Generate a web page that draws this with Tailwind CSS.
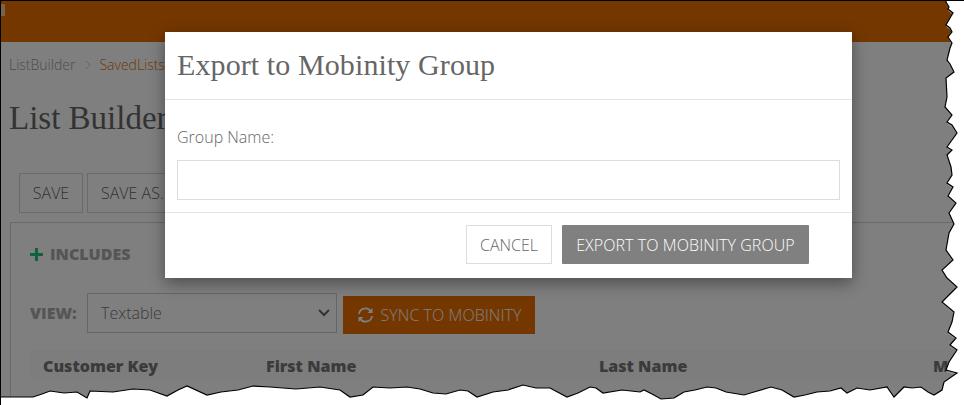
<!DOCTYPE html>
<html>
<head>
<meta charset="utf-8">
<script src="https://cdn.jsdelivr.net/npm/@tailwindcss/browser@4"></script>
</head>
<body class="bg-white">
<div class="relative w-[964px] h-[405px] overflow-hidden bg-white font-['Open_Sans',sans-serif] border-t border-l border-black">
  <div class="h-[41px] bg-[#e96e00] flex items-start pt-[3px]">
    <span class="block w-1 h-[12px] bg-white/60"></span>
  </div>
  <div class="pl-[8px] pt-[13px] flex items-center text-[14px] leading-[20px] text-[#999] font-light">
    <span>ListBuilder</span>
    <svg class="ml-[10px] mr-[8px]" width="6" height="10" viewBox="0 0 6 10"><path d="M1 1l4 4-4 4" fill="none" stroke="#ccc" stroke-width="1"/></svg>
    <span class="text-[#e96e00]">SavedLists</span>
  </div>
  <h1 class="pl-[8px] pt-[21px] text-[33px] leading-[44px] text-[#666] font-['Liberation_Serif',serif]">List Builder</h1>
  <div class="pl-[18px] pt-[33px] flex gap-1">
    <button class="w-[64px] h-10 border border-[#d5d5d5] text-[16px] text-[#666] font-light">SAVE</button>
    <button class="w-[110px] h-10 border border-[#d5d5d5] text-[16px] text-[#666] font-light text-left pl-[13px]">SAVE AS...</button>
  </div>
  <div class="ml-[9px] mt-[9px] border-l border-t border-[#d5d5d5] h-[180px]">
    <div class="pl-[19px] pt-[20px] flex items-center gap-[7px] text-[16px] leading-[22px] font-extrabold text-[#aaa]">
      <svg width="13" height="13" viewBox="0 0 13 13"><path d="M5 0h3v5h5v3h-5v5h-3v-5h-5v-3h5z" fill="#1cc47c"/></svg>
      <span>INCLUDES</span>
    </div>
    <div class="pl-[19px] pt-[28px] flex items-start">
      <span class="w-[57px] h-10 flex items-center text-[16px] font-extrabold text-[#aaa]">VIEW:</span>
      <div class="w-[250px] h-10 border border-[#ccc] flex items-center justify-between pl-[13px] pr-[6px] text-[16px] font-light text-[#777]">
        <span>Textable</span>
        <svg width="12" height="8" viewBox="0 0 12 8"><path d="M1 1l5 5 5-5" fill="none" stroke="#666" stroke-width="2"/></svg>
      </div>
      <button class="ml-[6px] mt-[3px] w-[192px] h-[38px] bg-[#e96e00] text-white text-[16px] font-light flex items-center justify-center gap-[7px]">
        <svg width="17" height="16" viewBox="0 0 17 16" fill="none" stroke="#fff" stroke-width="1.800"><path d="M2 7a6.500 6.500 0 0 1 12-2.500M15 9a6.500 6.500 0 0 1-12 2.500"/><path d="M15.500 1v5h-5zM1.500 15v-5h5z" fill="#fff" stroke="none"/></svg>
        <span class="tracking-[0.05px]">SYNC TO MOBINITY</span>
      </button>
    </div>
    <div class="ml-[19px] mt-[16px] grid grid-cols-[223px_333px_334px_100px] bg-[#fafafa] pl-[13px] pt-[2px] text-[16px] leading-[28px] font-extrabold text-[#777]">
      <span>Customer Key</span><span>First Name</span><span>Last Name</span><span>M</span>
    </div>
  </div>

  <div class="absolute inset-0 bg-black/50"></div>

  <div class="absolute left-[164px] top-[31px] w-[687px] h-[246px] bg-white shadow-[0_5px_15px_rgba(0,0,0,0.4)]">
    <div class="h-[68px] border-b border-[#e5e5e5] px-[12px] pt-[13px] text-[30px] leading-[40px] tracking-[0.1px] text-[#666] font-['Liberation_Serif',serif]">Export to Mobinity Group</div>
    <div class="h-[113px] border-b border-[#e5e5e5] px-[12px] pt-[26px]">
      <label class="block text-[16px] leading-[22px] font-light text-[#666]">Group Name:</label>
      <div class="mt-[12px] h-10 border border-[#ddd]"></div>
    </div>
    <div class="flex justify-end pr-[43px] pt-[12px] gap-[10px]">
      <button class="w-[86px] h-[39px] border border-[#ddd] text-[16px] font-light text-[#666]">CANCEL</button>
      <button class="w-[247px] h-[39px] bg-[#808080] rounded-[1px] text-[16px] font-light text-white tracking-[0.08px]">EXPORT TO MOBINITY GROUP</button>
    </div>
  </div>

  <svg class="absolute -left-px -top-px" width="964" height="405" viewBox="0 0 964 405">
    <path fill="#fff" stroke="#999" stroke-width="1.500" transform="translate(1 1.500)" d="M946 -5L946 2 949 7 948 9 953 13 950 18 946 25 950 28 952 32 948 37 952 43 950 48 947 60 950 64 954 72 946 78 947 97 945 107 952 115 947 122 952 125 957 133 947 147 952 150 947 155 951 167 952 175 947 183 953 187 948 196 956 203 949 213 954 224 949 233 946 250 953 260 942 270 947 278 957 287 942 302 954 312 952 322 948 332 956 338 950 345 957 350 949 362 946 370 957 373 944 382 942 390 934 395 928 392 921 387 912 388 904 387 899 392 894 397 887 387 870 390 857 388 847 393 841 388 830 391 817 392 805 395 794 397 782 390 771 387 754 392 744 395 726 392 716 388 707 387 695 390 684 392 674 398 661 399 652 394 644 390 640 392 622 390 603 393 596 388 590 387 578 393 567 397 550 388 536 388 523 385 508 390 493 392 477 397 468 391 460 390 446 394 433 393 420 389 407 387 390 388 373 387 363 395 350 397 340 390 320 387 296 389 270 387 253 386 238 390 221 392 207 395 187 386 178 390 167 396 150 390 133 389 113 392 90 391 87 398 77 392 64 393 50 391 42 394 33 397 -5 397 -5 410 970 410 970 -5Z"/>
    <path fill="#fff" stroke="#000" stroke-width="1.200" d="M946 -5L946 2 949 7 948 9 953 13 950 18 946 25 950 28 952 32 948 37 952 43 950 48 947 60 950 64 954 72 946 78 947 97 945 107 952 115 947 122 952 125 957 133 947 147 952 150 947 155 951 167 952 175 947 183 953 187 948 196 956 203 949 213 954 224 949 233 946 250 953 260 942 270 947 278 957 287 942 302 954 312 952 322 948 332 956 338 950 345 957 350 949 362 946 370 957 373 944 382 942 390 934 395 928 392 921 387 912 388 904 387 899 392 894 397 887 387 870 390 857 388 847 393 841 388 830 391 817 392 805 395 794 397 782 390 771 387 754 392 744 395 726 392 716 388 707 387 695 390 684 392 674 398 661 399 652 394 644 390 640 392 622 390 603 393 596 388 590 387 578 393 567 397 550 388 536 388 523 385 508 390 493 392 477 397 468 391 460 390 446 394 433 393 420 389 407 387 390 388 373 387 363 395 350 397 340 390 320 387 296 389 270 387 253 386 238 390 221 392 207 395 187 386 178 390 167 396 150 390 133 389 113 392 90 391 87 398 77 392 64 393 50 391 42 394 33 397 -5 397 -5 410 970 410 970 -5Z"/>
  </svg>
</div>
</body>
</html>
